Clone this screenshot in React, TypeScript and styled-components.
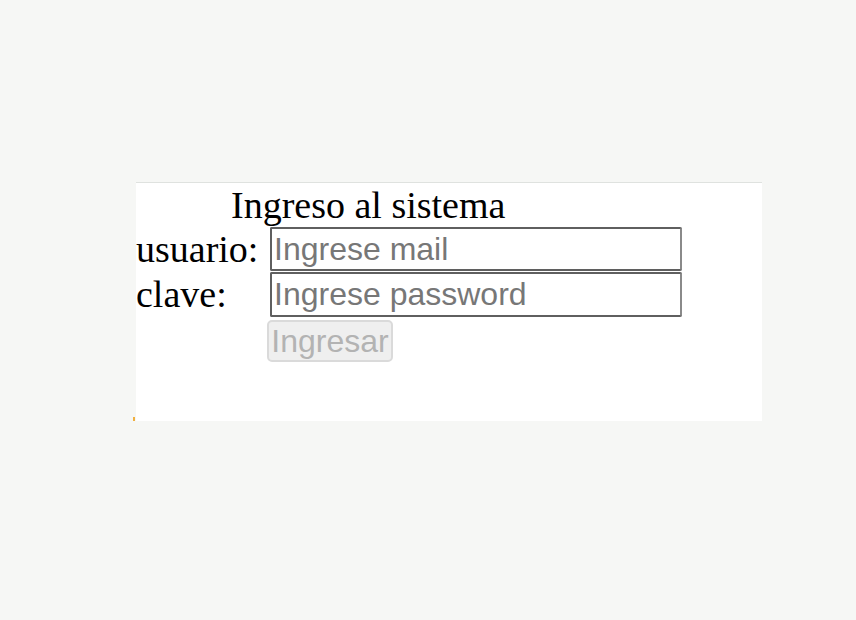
import React from "react";
import styled, { createGlobalStyle } from "styled-components";

const Global = createGlobalStyle`
  html, body { margin: 0; padding: 0; background: #f6f7f5; }
  body { font-family: "Liberation Serif", "Times New Roman", serif; }
`;

const Page = styled.div`
  width: 856px;
  height: 620px;
  padding: 182px 0 0 136px;
  box-sizing: border-box;
`;

const Panel = styled.form`
  position: relative;
  width: 626px;
  height: 239px;
  box-sizing: border-box;
  background: #ffffff;
  border-top: 1px solid #dfe2df;
  margin: 0;
  &::before {
    content: "";
    position: absolute;
    left: -3px;
    bottom: 0;
    width: 2px;
    height: 4px;
    background: #f0b040;
  }
`;

const Title = styled.div`
  font-size: 38px;
  line-height: 44px;
  color: #000;
  padding-left: 95px;
`;

const Grid = styled.div`
  display: grid;
  grid-template-columns: 134px 412px;
  row-gap: 1px;
`;

const Label = styled.label`
  font-size: 38px;
  line-height: 44px;
  color: #000;
  white-space: nowrap;
`;

const Input = styled.input<{ $h?: number }>`
  box-sizing: border-box;
  width: 412px;
  height: ${(p) => p.$h ?? 44}px;
  margin: 0;
  padding: 0 2px;
  border: 2px solid #5f5f5f;
  border-right-color: #8a8a8a;
  border-radius: 2px;
  font-family: "Liberation Sans", Arial, sans-serif;
  font-size: 32px;
  color: #000;
  background: #fff;
  outline: none;
  &::placeholder { color: #777777; }
`;

const Empty = styled.div``;

const Button = styled.button`
  box-sizing: border-box;
  justify-self: start;
  margin: 2px 0 0 -3px;
  width: 126px;
  height: 42px;
  padding: 0 2px;
  background: #efefef;
  border: 2px solid #dadada;
  border-radius: 5px;
  font-family: "Liberation Sans", Arial, sans-serif;
  font-size: 32px;
  color: #b3b3b3;
`;

export default function App() {
  return (
    <>
      <Global />
      <Page>
        <Panel onSubmit={(e) => e.preventDefault()}>
          <Title>Ingreso al sistema</Title>
          <Grid>
            <Label htmlFor="mail">usuario:</Label>
            <Input id="mail" type="text" placeholder="Ingrese mail" />
            <Label htmlFor="pass">clave:</Label>
            <Input id="pass" type="password" placeholder="Ingrese password" $h={45} />
            <Empty />
            <Button type="submit" disabled>Ingresar</Button>
          </Grid>
        </Panel>
      </Page>
    </>
  );
}
